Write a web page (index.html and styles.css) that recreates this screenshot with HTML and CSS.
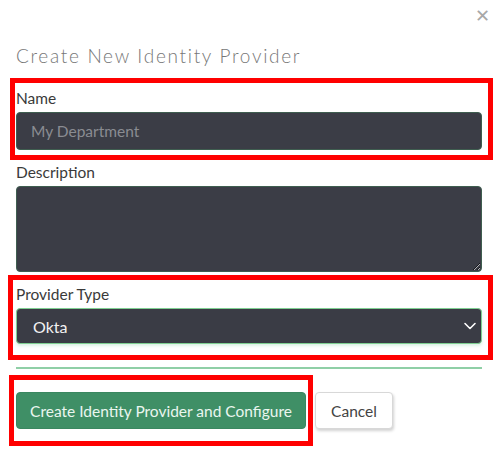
FILE: index.html
```html
<!DOCTYPE html>
<html>
<head>
<meta charset="utf-8">
<link rel="stylesheet" href="styles.css">
</head>
<body>
<div class="modal">
  <div class="top">
    <span class="close">&#x2715;</span>
  </div>
  <h2 class="title">Create New Identity Provider</h2>
  <label class="label">Name</label>
  <input class="field" type="text" placeholder="My Department">
  <label class="label gap">Description</label>
  <textarea class="field area"></textarea>
  <label class="label gap">Provider Type</label>
  <div class="select">
    <span>Okta</span>
    <svg width="14" height="10" viewBox="0 0 14 10"><polyline points="2,2.5 7,7.5 12,2.5" fill="none" stroke="#fff" stroke-width="1.6" stroke-linecap="round" stroke-linejoin="round"/></svg>
  </div>
  <hr class="rule">
  <div class="actions">
    <button class="btn primary">Create Identity Provider and Configure</button>
    <button class="btn cancel">Cancel</button>
  </div>
  <div class="mark m1"></div>
  <div class="mark m2"></div>
  <div class="mark m3"></div>
</div>
</body>
</html>
```

FILE: styles.css
```css
html, body { margin: 0; padding: 0; background: #fff; }
body { font-family: Lato, "Open Sans", sans-serif; width: 500px; height: 472px; overflow: hidden; }
.modal { position: relative; padding: 0 18px 0 16px; display: flex; flex-direction: column; }
.top { height: 30px; display: flex; justify-content: flex-end; align-items: center; margin-right: -8px; }
.close { color: #a8a8a8; font-size: 18px; font-weight: 400; line-height: 30px; }
.title { margin: 14px 0 0; font-size: 19px; font-weight: 300; line-height: 24px; letter-spacing: 1.7px; color: #777; }
.label { display: block; margin-top: 20px; font-size: 15.5px; line-height: 20px; color: #3a3a3a; }
.label.gap { margin-top: 12px; }
.field { box-sizing: border-box; width: 466px; margin-top: 4px; height: 38px; background: #3b3d46; border: 1px solid #3f5e50; border-radius: 4px; padding: 0 14px; font-family: inherit; font-size: 15.5px; color: #ddd; outline: none; }
.field::placeholder { color: #8a8c92; }
.area { height: 86px; resize: vertical; display: block; }
.select { box-sizing: border-box; width: 466px; margin-top: 4px; height: 36px; background: #3a3c45; border: 1px solid #7fcf92; border-radius: 4px; box-shadow: 0 2px 3px rgba(120, 200, 150, 0.25); display: flex; align-items: center; justify-content: space-between; padding: 0 4px 0 16px; font-size: 16px; color: #f2f2f2; }
.rule { margin: 23px 0 0; border: 0; border-top: 2px solid #8fcfa6; height: 0; }
.actions { margin-top: 23px; display: flex; gap: 9px; }
.btn { font-family: inherit; font-size: 15.5px; height: 37px; border-radius: 4px; cursor: pointer; }
.primary { width: 290px; background: #3f8f66; border: 1px solid #3a8760; color: #eaf6ef; }
.cancel { width: 78px; background: #fff; border: 1px solid #d8d8d8; color: #444; box-shadow: 1px 2px 3px rgba(0, 0, 0, 0.18); }
.mark { position: absolute; border: 5px solid #ff0000; box-sizing: border-box; }
.m1 { left: 10px; top: 78px; width: 483px; height: 82px; }
.m2 { left: 8px; top: 275px; width: 485px; height: 85px; }
.m3 { left: 9px; top: 375px; width: 304px; height: 71px; }
```
